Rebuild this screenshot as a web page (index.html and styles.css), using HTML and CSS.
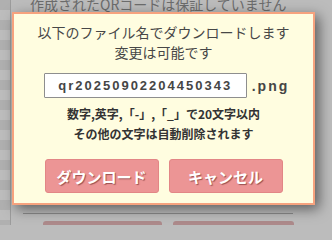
FILE: index.html
```
<!DOCTYPE html>
<html lang="ja">
<head>
<meta charset="utf-8">
<title>ダウンロード</title>
<link rel="stylesheet" href="styles.css">
</head>
<body>
<div class="page">
  <div class="rail"></div>
  <div class="content">
    <p class="bg-title">作成されたQRコードは保証していません</p>
    <div class="spacer"></div>
    <div class="bg-footer">
      <div class="bg-line"></div>
      <div class="bg-buttons">
        <div class="bg-btn bg-btn-a"></div>
        <div class="bg-btn bg-btn-b"></div>
      </div>
    </div>
  </div>
</div>

<div class="dialog">
  <p class="msg">以下のファイル名でダウンロードします<br>変更は可能です</p>
  <div class="name-row">
    <input class="name-input" type="text" value="qr20250902204450343">
    <span class="ext">.png</span>
  </div>
  <p class="note">数字,英字,「-」,「_」で20文字以内<br>その他の文字は自動削除されます</p>
  <div class="actions">
    <button class="btn">ダウンロード</button>
    <button class="btn">キャンセル</button>
  </div>
</div>
</body>
</html>
```
FILE: styles.css
```
html, body {
  margin: 0;
  padding: 0;
  width: 332px;
  height: 225px;
  overflow: hidden;
}
body {
  background: #bcbcbc;
  font-family: "Noto Sans CJK JP", "Noto Sans", sans-serif;
  position: relative;
}
.page {
  display: flex;
  height: 225px;
  overflow: hidden;
}
.rail {
  width: 10px;
  flex: none;
  border-right: 1px solid #9c9c9c;
  background: repeating-linear-gradient(#b0b0b0 0 10px, #bdbdbd 10px 20px);
}
.content {
  flex: 1;
  display: flex;
  flex-direction: column;
  overflow: hidden;
}
.bg-title {
  margin: -6px 0 0 19px;
  font-size: 14px;
  line-height: 20px;
  color: #6c6c6c;
  white-space: nowrap;
}
.spacer {
  flex: 1;
}
.bg-footer {
  height: 12px;
  flex: none;
  display: flex;
  flex-direction: column;
  gap: 7px;
  overflow: hidden;
}
.bg-line {
  margin-left: 12px;
  width: 270px;
  height: 1px;
  flex: none;
  background: #8a8a8a;
}
.bg-buttons {
  display: flex;
  gap: 11px;
  margin-left: 32px;
}
.bg-btn {
  height: 34px;
  border-radius: 3px;
  background: #ad8a8b;
}
.bg-btn-a { width: 119px; }
.bg-btn-b { width: 121px; }

.dialog {
  position: absolute;
  left: 12px;
  top: 12px;
  width: 303px;
  height: 193px;
  box-sizing: border-box;
  border: 2px solid #f6a27e;
  background: #fffde0;
  box-shadow: 4px 4px 12px rgba(0, 0, 0, 0.5);
  display: flex;
  flex-direction: column;
  align-items: center;
  padding-top: 8px;
}
.msg {
  margin: 0;
  font-size: 14px;
  line-height: 20px;
  color: #474747;
  text-align: center;
}
.name-row {
  margin-top: 11px;
  display: flex;
  align-items: center;
  gap: 5px;
  margin-left: 6px;
}
.name-input {
  width: 203px;
  height: 25px;
  box-sizing: border-box;
  border: 1px solid #8e8e8e;
  border-radius: 1px;
  background: #fff;
  padding: 0;
  margin: 0;
  text-align: center;
  font-family: "Liberation Sans", Arial, sans-serif;
  font-weight: bold;
  font-size: 13px;
  letter-spacing: 2px;
  color: #454545;
}
.ext {
  font-family: "Liberation Sans", Arial, sans-serif;
  font-weight: bold;
  font-size: 14px;
  letter-spacing: 2px;
  color: #454545;
}
.note {
  margin: 6px 0 0;
  font-size: 12px;
  line-height: 20px;
  font-weight: bold;
  color: #333;
  text-align: center;
}
.actions {
  margin-top: 15px;
  display: flex;
  gap: 10px;
}
.btn {
  width: 114px;
  height: 34px;
  box-sizing: border-box;
  border: 1px solid #e28686;
  border-radius: 3px;
  background: #ec9595;
  color: #fff;
  font-family: "Noto Sans CJK JP", sans-serif;
  font-weight: bold;
  font-size: 15px;
  padding: 0;
  text-shadow: 1px 1px 1px #9a5050;
}
```
